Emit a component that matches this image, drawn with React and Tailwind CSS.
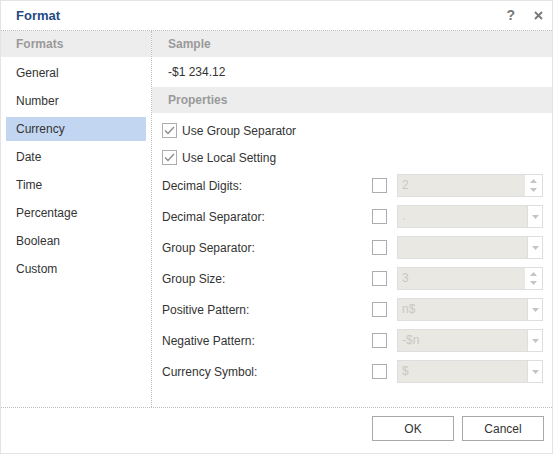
import React from "react";

const formats = ["General", "Number", "Currency", "Date", "Time", "Percentage", "Boolean", "Custom"];

const properties = [
  { label: "Decimal Digits:", value: "2", kind: "spin" },
  { label: "Decimal Separator:", value: ".", kind: "select" },
  { label: "Group Separator:", value: "", kind: "select" },
  { label: "Group Size:", value: "3", kind: "spin" },
  { label: "Positive Pattern:", value: "n$", kind: "select" },
  { label: "Negative Pattern:", value: "-$n", kind: "select" },
  { label: "Currency Symbol:", value: "$", kind: "select" },
];

const CheckBox = ({ checked }) => (
  <span className="flex h-[15px] w-[15px] shrink-0 items-center justify-center border border-[#adadad] bg-white">
    {checked && (
      <svg width="11" height="9" viewBox="0 0 11 9">
        <path d="M1 4.5 L4 7.5 L10 1" fill="none" stroke="#8c8c8c" strokeWidth="1.4" />
      </svg>
    )}
  </span>
);

const DisabledField = ({ value, kind }) => (
  <div className="flex h-[23px] w-[146px] shrink-0 border border-[#dedede] bg-[#e9e8e2]">
    <span className="flex-1 pl-[4px] text-[12px] leading-[21px] text-[#c9c9c4]">{value}</span>
    {kind === "spin" ? (
      <span className="flex w-[17px] flex-col items-center justify-center gap-[5px] bg-white">
        <svg width="7" height="4" viewBox="0 0 7 4">
          <path d="M0 4 L3.5 0 L7 4 Z" fill="#c4c4c4" />
        </svg>
        <svg width="7" height="4" viewBox="0 0 7 4">
          <path d="M0 0 L3.5 4 L7 0 Z" fill="#c4c4c4" />
        </svg>
      </span>
    ) : (
      <span className="flex w-[15px] items-center justify-center border-l border-[#dedede] bg-white">
        <svg width="7" height="4" viewBox="0 0 7 4">
          <path d="M0 0 L3.5 4 L7 0 Z" fill="#c4c4c4" />
        </svg>
      </span>
    )}
  </div>
);

export default function App() {
  return (
    <div
      className="flex h-[454px] w-[553px] flex-col border border-[#e4e4e4] bg-white text-[12px] text-[#333]"
      style={{ fontFamily: '"Liberation Sans", Arial, sans-serif' }}
    >
      <div className="flex h-[30px] shrink-0 items-center border-b border-dotted border-[#bdbdbd] pl-[15px] pr-[9px]">
        <span className="flex-1 text-[13px] font-bold text-[#1f4b82]">Format</span>
        <span className="mr-[19px] text-[14px] font-bold text-[#777]">?</span>
        <svg width="9" height="9" viewBox="0 0 9 9">
          <path d="M1 1 L8 8 M8 1 L1 8" stroke="#777" strokeWidth="1.8" />
        </svg>
      </div>

      <div className="flex min-h-0 flex-1">
        <div className="flex w-[151px] shrink-0 flex-col border-r border-dotted border-[#bdbdbd]">
          <div className="flex h-[26px] items-center bg-[#ededed] pl-[15px] font-bold text-[#9a9a9a]">
            Formats
          </div>
          <div className="flex flex-col gap-1 pt-[4px]">
            {formats.map((f) => (
              <div
                key={f}
                className={
                  "mx-[5px] flex h-6 items-center pl-[10px] " +
                  (f === "Currency" ? "bg-[#c3d6f1]" : "")
                }
              >
                {f}
              </div>
            ))}
          </div>
        </div>

        <div className="flex flex-1 flex-col">
          <div className="flex h-[26px] items-center bg-[#ededed] pl-[16px] font-bold text-[#9a9a9a]">
            Sample
          </div>
          <div className="flex h-[30px] items-center pl-[16px]">-$1 234.12</div>
          <div className="flex h-[26px] items-center bg-[#ededed] pl-[16px] font-bold text-[#9a9a9a]">
            Properties
          </div>
          <div className="flex flex-col pl-[10px] pr-[9px] pt-[4px]">
            <label className="flex h-[27px] items-center gap-[5px]">
              <CheckBox checked />
              Use Group Separator
            </label>
            <label className="flex h-[27px] items-center gap-[5px]">
              <CheckBox checked />
              Use Local Setting
            </label>
            <div className="mt-[3px] flex flex-col gap-2">
              {properties.map((p) => (
                <div key={p.label} className="flex h-[23px] items-center">
                  <span className="flex-1">{p.label}</span>
                  <CheckBox />
                  <span className="w-[10px]" />
                  <DisabledField value={p.value} kind={p.kind} />
                </div>
              ))}
            </div>
          </div>
        </div>
      </div>

      <div className="flex h-[46px] shrink-0 justify-end gap-2 border-t border-dotted border-[#bdbdbd] pr-[8px] pt-[8px]">
        <button className="h-[25px] w-[82px] border border-[#a9a9a9] bg-white text-[12px] text-[#333]">
          OK
        </button>
        <button className="h-[25px] w-[82px] border border-[#a9a9a9] bg-white text-[12px] text-[#333]">
          Cancel
        </button>
      </div>
    </div>
  );
}
